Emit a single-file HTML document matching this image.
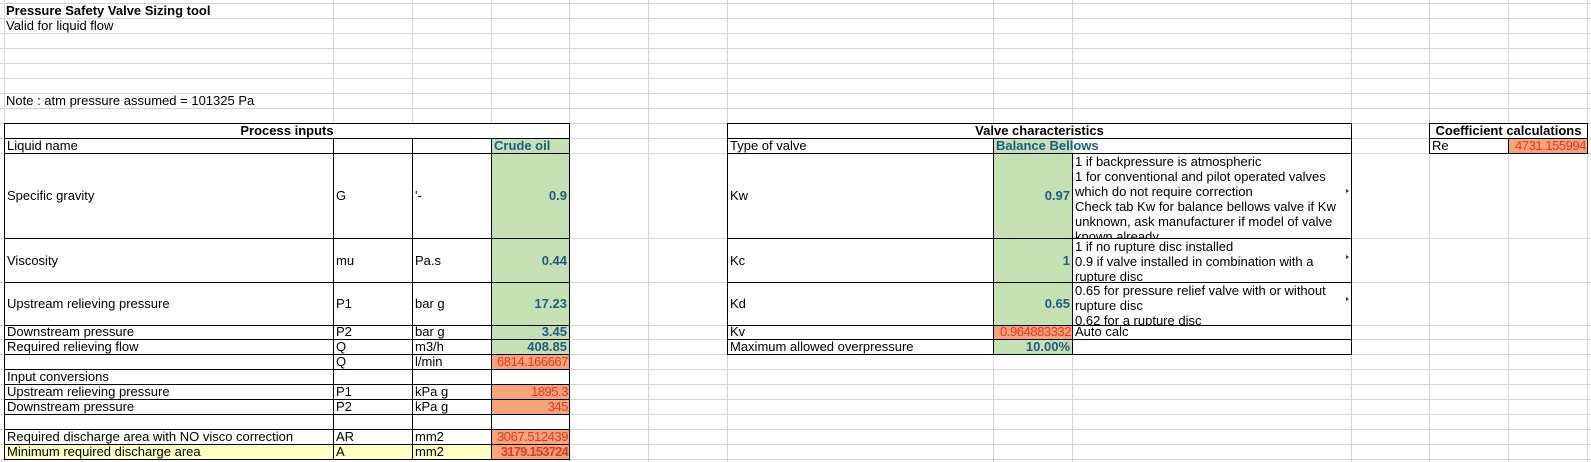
<!DOCTYPE html>
<html><head><meta charset="utf-8"><style>
body{margin:0;width:1591px;height:462px;background:#fff;position:relative;overflow:hidden;font-family:"Liberation Sans",Arial,sans-serif;font-size:13px;color:#000}
.h{position:absolute;left:0;width:1591px;height:1px;background:#d4d4d4}
.v{position:absolute;top:0;height:462px;width:1px;background:#d4d4d4}
.c{position:absolute;box-sizing:border-box;border:1px solid #000;background:#fff;overflow:hidden;white-space:nowrap;display:flex;align-items:flex-end;padding:0 2px;line-height:14px}
.r{justify-content:flex-end}
.m{align-items:center}
.ctr{justify-content:center;font-weight:bold}
.g{background:#c5e0b3}
.o{background:#f7a478;color:#e8352a;letter-spacing:-0.45px;padding:0 1px}
.y{background:#ffffc4}
.b{color:#1f5c85;font-weight:bold}
.t{position:absolute;white-space:nowrap;line-height:14px}
.cm{align-items:flex-start;white-space:normal;line-height:15px;display:block}
.tri{position:absolute;left:1346px;width:0;height:0;border-top:2px solid transparent;border-bottom:2px solid transparent;border-left:3px solid #333}
</style></head><body>
<div class="h" style="top:3px"></div><div class="h" style="top:18px"></div><div class="h" style="top:33px"></div><div class="h" style="top:48px"></div><div class="h" style="top:63px"></div><div class="h" style="top:78px"></div><div class="h" style="top:93px"></div><div class="h" style="top:108px"></div><div class="h" style="top:123px"></div><div class="h" style="top:138px"></div><div class="h" style="top:153px"></div><div class="h" style="top:238px"></div><div class="h" style="top:282px"></div><div class="h" style="top:325px"></div><div class="h" style="top:339px"></div><div class="h" style="top:354px"></div><div class="h" style="top:369px"></div><div class="h" style="top:384px"></div><div class="h" style="top:399px"></div><div class="h" style="top:414px"></div><div class="h" style="top:429px"></div><div class="h" style="top:444px"></div><div class="h" style="top:459px"></div>
<div class="v" style="left:4px"></div><div class="v" style="left:333px"></div><div class="v" style="left:412px"></div><div class="v" style="left:491px"></div><div class="v" style="left:569px"></div><div class="v" style="left:648px"></div><div class="v" style="left:727px"></div><div class="v" style="left:993px"></div><div class="v" style="left:1072px"></div><div class="v" style="left:1351px"></div><div class="v" style="left:1429px"></div><div class="v" style="left:1508px"></div><div class="v" style="left:1587px"></div>
<div class="t" style="left:6px;top:4px;font-weight:bold">Pressure Safety Valve Sizing tool</div>
<div class="t" style="left:6px;top:19px">Valid for liquid flow</div>
<div class="t" style="left:6px;top:94px">Note : atm pressure assumed = 101325 Pa</div>

<div class="c ctr" style="left:4px;top:123px;width:566px;height:16px">Process inputs</div>
<div class="c" style="left:4px;top:138px;width:330px;height:16px">Liquid name</div>
<div class="c" style="left:333px;top:138px;width:80px;height:16px"></div>
<div class="c" style="left:412px;top:138px;width:80px;height:16px"></div>
<div class="c g b" style="left:491px;top:138px;width:79px;height:16px">Crude oil</div>

<div class="c m" style="left:4px;top:153px;width:330px;height:86px">Specific gravity</div>
<div class="c m" style="left:333px;top:153px;width:80px;height:86px">G</div>
<div class="c m" style="left:412px;top:153px;width:80px;height:86px">'-</div>
<div class="c m r g b" style="left:491px;top:153px;width:79px;height:86px">0.9</div>

<div class="c m" style="left:4px;top:238px;width:330px;height:45px">Viscosity</div>
<div class="c m" style="left:333px;top:238px;width:80px;height:45px">mu</div>
<div class="c m" style="left:412px;top:238px;width:80px;height:45px">Pa.s</div>
<div class="c m r g b" style="left:491px;top:238px;width:79px;height:45px">0.44</div>

<div class="c m" style="left:4px;top:282px;width:330px;height:44px">Upstream relieving pressure</div>
<div class="c m" style="left:333px;top:282px;width:80px;height:44px">P1</div>
<div class="c m" style="left:412px;top:282px;width:80px;height:44px">bar g</div>
<div class="c m r g b" style="left:491px;top:282px;width:79px;height:44px">17.23</div>

<div class="c" style="left:4px;top:325px;width:330px;height:15px">Downstream pressure</div>
<div class="c" style="left:333px;top:325px;width:80px;height:15px">P2</div>
<div class="c" style="left:412px;top:325px;width:80px;height:15px">bar g</div>
<div class="c r g b" style="left:491px;top:325px;width:79px;height:15px">3.45</div>

<div class="c" style="left:4px;top:339px;width:330px;height:16px">Required relieving flow</div>
<div class="c" style="left:333px;top:339px;width:80px;height:16px">Q</div>
<div class="c" style="left:412px;top:339px;width:80px;height:16px">m3/h</div>
<div class="c r g b" style="left:491px;top:339px;width:79px;height:16px">408.85</div>

<div class="c" style="left:4px;top:354px;width:330px;height:16px"></div>
<div class="c" style="left:333px;top:354px;width:80px;height:16px">Q</div>
<div class="c" style="left:412px;top:354px;width:80px;height:16px">l/min</div>
<div class="c r o" style="left:491px;top:354px;width:79px;height:16px">6814.166667</div>

<div class="c" style="left:4px;top:369px;width:330px;height:16px">Input conversions</div>
<div class="c" style="left:333px;top:369px;width:80px;height:16px"></div>
<div class="c" style="left:412px;top:369px;width:80px;height:16px"></div>
<div class="c" style="left:491px;top:369px;width:79px;height:16px"></div>

<div class="c" style="left:4px;top:384px;width:330px;height:16px">Upstream relieving pressure</div>
<div class="c" style="left:333px;top:384px;width:80px;height:16px">P1</div>
<div class="c" style="left:412px;top:384px;width:80px;height:16px">kPa g</div>
<div class="c r o" style="left:491px;top:384px;width:79px;height:16px">1895.3</div>

<div class="c" style="left:4px;top:399px;width:330px;height:16px">Downstream pressure</div>
<div class="c" style="left:333px;top:399px;width:80px;height:16px">P2</div>
<div class="c" style="left:412px;top:399px;width:80px;height:16px">kPa g</div>
<div class="c r o" style="left:491px;top:399px;width:79px;height:16px">345</div>

<div class="c" style="left:4px;top:414px;width:330px;height:16px"></div>
<div class="c" style="left:333px;top:414px;width:80px;height:16px"></div>
<div class="c" style="left:412px;top:414px;width:80px;height:16px"></div>
<div class="c" style="left:491px;top:414px;width:79px;height:16px"></div>

<div class="c" style="left:4px;top:429px;width:330px;height:16px">Required discharge area with NO visco correction</div>
<div class="c" style="left:333px;top:429px;width:80px;height:16px">AR</div>
<div class="c" style="left:412px;top:429px;width:80px;height:16px">mm2</div>
<div class="c r o" style="left:491px;top:429px;width:79px;height:16px">3067.512439</div>

<div class="c y" style="left:4px;top:444px;width:330px;height:16px">Minimum required discharge area</div>
<div class="c y" style="left:333px;top:444px;width:80px;height:16px">A</div>
<div class="c y" style="left:412px;top:444px;width:80px;height:16px">mm2</div>
<div class="c r o" style="left:491px;top:444px;width:79px;height:16px;font-weight:bold;letter-spacing:-0.8px">3179.153724</div>

<div class="c ctr" style="left:727px;top:123px;width:625px;height:16px">Valve characteristics</div>
<div class="c" style="left:727px;top:138px;width:267px;height:16px">Type of valve</div>
<div class="c" style="left:993px;top:138px;width:359px;height:16px;border-left:none"></div>
<div class="c g b" style="left:993px;top:138px;width:80px;height:16px;overflow:visible;border-right:none;z-index:2">Balance Bellows</div>

<div class="c m" style="left:727px;top:153px;width:267px;height:86px">Kw</div>
<div class="c m r g b" style="left:993px;top:153px;width:80px;height:86px">0.97</div>
<div class="c cm" style="left:1072px;top:153px;width:280px;height:86px">1 if backpressure is atmospheric<br>1 for conventional and pilot operated valves which do not require correction<br>Check tab Kw for balance bellows valve if Kw unknown, ask manufacturer if model of valve known already</div>

<div class="c m" style="left:727px;top:238px;width:267px;height:45px">Kc</div>
<div class="c m r g b" style="left:993px;top:238px;width:80px;height:45px">1</div>
<div class="c cm" style="left:1072px;top:238px;width:280px;height:45px">1 if no rupture disc installed<br>0.9 if valve installed in combination with a rupture disc</div>

<div class="c m" style="left:727px;top:282px;width:267px;height:44px">Kd</div>
<div class="c m r g b" style="left:993px;top:282px;width:80px;height:44px">0.65</div>
<div class="c cm" style="left:1072px;top:282px;width:280px;height:44px">0.65 for pressure relief valve with or without rupture disc<br>0.62 for a rupture disc</div>

<div class="c" style="left:727px;top:325px;width:267px;height:15px">Kv</div>
<div class="c r o" style="left:993px;top:325px;width:80px;height:15px">0.964883332</div>
<div class="c" style="left:1072px;top:325px;width:280px;height:15px">Auto calc</div>

<div class="c" style="left:727px;top:339px;width:267px;height:16px">Maximum allowed overpressure</div>
<div class="c r g b" style="left:993px;top:339px;width:80px;height:16px">10.00%</div>
<div class="c" style="left:1072px;top:339px;width:280px;height:16px"></div>

<div class="tri" style="top:189px"></div>
<div class="tri" style="top:255px"></div>
<div class="tri" style="top:297px"></div>

<div class="c ctr" style="left:1429px;top:123px;width:159px;height:16px">Coefficient calculations</div>
<div class="c" style="left:1429px;top:138px;width:80px;height:16px">Re</div>
<div class="c r o" style="left:1508px;top:138px;width:80px;height:16px">4731.155994</div>
</body></html>
